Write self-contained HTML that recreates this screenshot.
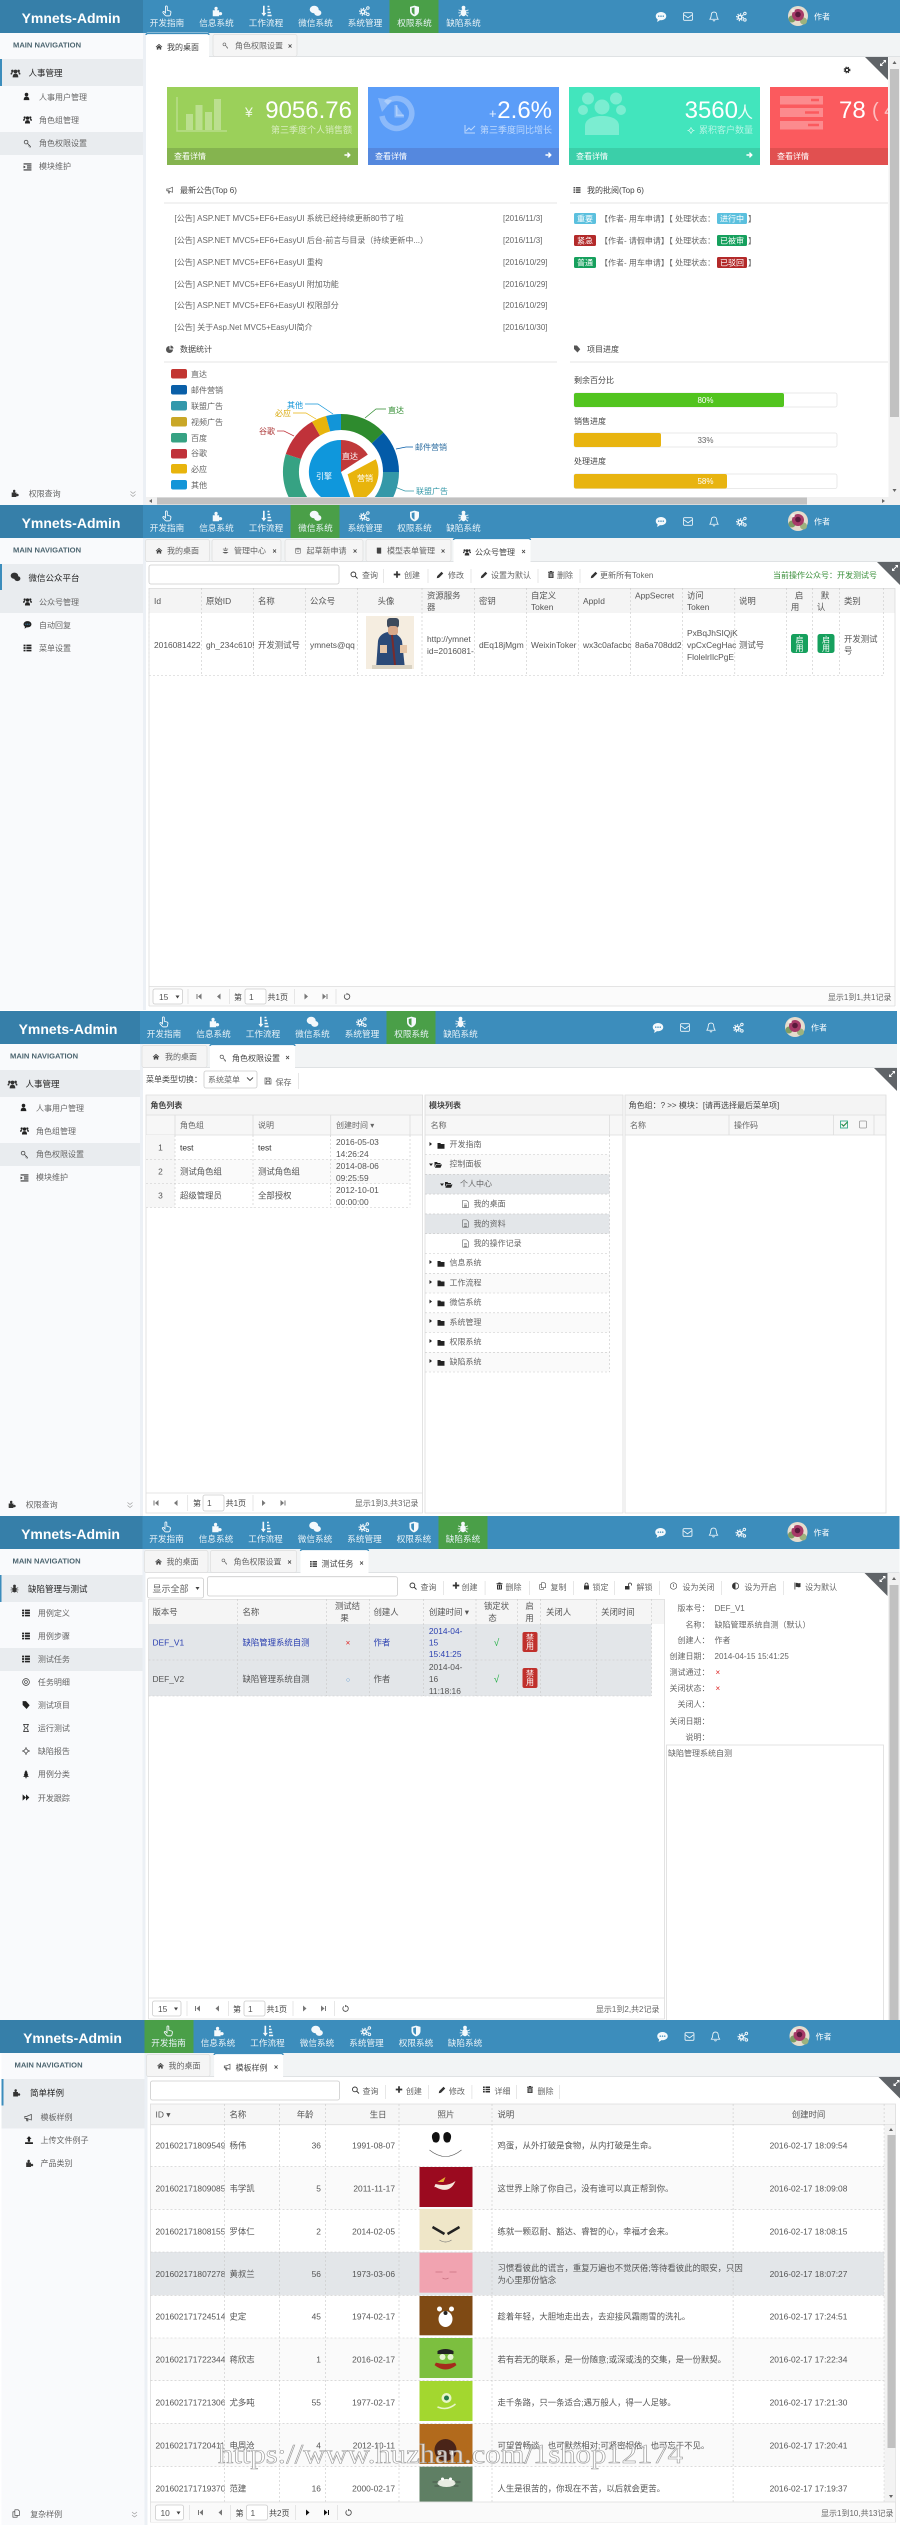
<!DOCTYPE html>
<html lang="zh"><head><meta charset="utf-8"><title>Ymnets-Admin</title>
<style>
html,body{margin:0;padding:0;background:#fff;width:900px;height:2525px;overflow:hidden}
svg{display:block;filter:blur(.3px)}
text{font-family:"Liberation Sans","Noto Sans CJK SC",sans-serif;font-size:8px;fill:#666}
use{fill:currentColor;stroke:currentColor}
.logo{font-size:14px;font-weight:bold;fill:#fff;text-anchor:middle}
.nav{font-size:8.6px;fill:#eaf3f8;text-anchor:middle}
.w{fill:#fff}.d{fill:#444}.k{fill:#222}.m{text-anchor:middle}.r{text-anchor:end}
.mn{font-size:7.6px;font-weight:bold;fill:#4b646f}
.big{font-size:24px;fill:#fff}.sub{font-size:9px;fill:#fff;fill-opacity:.6}
.td{font-size:8.4px;fill:#555}
.da{fill:none;stroke:#c8c8c8;stroke-width:.6;stroke-dasharray:2 2}
.ln{fill:none;stroke:#ddd;stroke-width:.8}
.box{fill:#fff;stroke:#ccc;stroke-width:.8}
.sep{stroke:#ddd;stroke-width:.7}
</style></head><body>
<svg width="900" height="2525" viewBox="0 0 900 2525" xmlns="http://www.w3.org/2000/svg">
<defs>
<symbol id="hand" viewBox="0 0 16 16"><path fill="none" stroke-width="1.2" d="M6 8V2.5a1.2 1.2 0 0 1 2.4 0V7l3.6 1c1 .3 1.4 1 1.2 2l-.7 3.4c-.2.8-.7 1.1-1.5 1.1H7c-.6 0-1-.2-1.4-.7L2.7 10.4c-.8-1 .5-2.3 1.5-1.5L6 10.5z"/></symbol>
<symbol id="puzzle" viewBox="0 0 16 16"><path stroke="none" d="M3 7h3.2C5.2 5.8 5 4.8 5.4 3.6 6 1.8 9 1.8 9.5 3.6c.3 1.2 0 2.2-1 3.4H11.500v3c1-.7 2-.9 3-.3 1.400.9 1.400 3 0 3.800-1 .5-2 .3-3-.4V15H3z"/></symbol>
<symbol id="flow" viewBox="0 0 16 16"><path stroke="none" d="M4 1h2.200v9.500H8.500L5.100 15 1.800 10.500H4zM10 1h2.500v2H10zM10 5h3.500v2H10zM10 9h4.500v2H10zM10 13h5.500v2H10z"/></symbol>
<symbol id="wechat" viewBox="0 0 16 16"><ellipse stroke="none" cx="6.300" cy="6" rx="6" ry="5"/><ellipse stroke="none" cx="11" cy="10.500" rx="4.800" ry="4"/></symbol>
<symbol id="cogs" viewBox="0 0 16 16"><g fill="none"><circle cx="6" cy="9" r="2.500" stroke-width="1.900"/><circle cx="6" cy="9" r="4.500" stroke-width="1.700" stroke-dasharray="1.700 1.800"/><circle cx="12.500" cy="4" r="1.700" stroke-width="1.300"/><circle cx="12.500" cy="12.500" r="1.700" stroke-width="1.300"/></g></symbol>
<symbol id="shield" viewBox="0 0 16 16"><path stroke="none" fill-rule="evenodd" d="M8 .8 14 2.500V8c0 3.800-3 6.200-6 7.200C5 14.200 2 11.800 2 8V2.500zM8 3 4.300 4v4c0 2.400 1.800 4 3.700 4.800z"/></symbol>
<symbol id="bug" viewBox="0 0 16 16"><ellipse stroke="none" cx="8" cy="10" rx="3.700" ry="5"/><circle stroke="none" cx="8" cy="3.500" r="2.500"/><path fill="none" stroke-width="1.100" d="M1.500 6.500 5 8M14.500 6.500 11 8M1 10.500h3.500M15 10.500h-3.500M2 15l3-2.500M14 15l-3-2.500"/></symbol>
<symbol id="chat" viewBox="0 0 16 16"><path stroke="none" d="M8 2c4 0 7 2.400 7 5.500S12 13 8 13l-1.500-.1C5.500 14 3.500 15 2.500 15c.6-.8 1-2 1-3.100C2 10.900 1 9.300 1 7.500 1 4.400 4 2 8 2z"/><g stroke="none" fill="#3c8dbc"><circle cx="5" cy="7.500" r="1"/><circle cx="8" cy="7.500" r="1"/><circle cx="11" cy="7.500" r="1"/></g></symbol>
<symbol id="mail" viewBox="0 0 16 16"><g fill="none" stroke-width="1.200"><rect x="1.500" y="2.500" width="13" height="11" rx="1.500"/><path d="M2 5.500 8 10l6-4.500"/></g></symbol>
<symbol id="bell" viewBox="0 0 16 16"><path fill="none" stroke-width="1.200" d="M8 1.500c-2.800 0-4 2-4 4.500 0 3-1 4.500-2 6h12c-1-1.500-2-3-2-6 0-2.500-1.200-4.500-4-4.500zM6.500 13.500c.3 1.200 2.700 1.200 3 0"/></symbol>
<symbol id="users" viewBox="0 0 16 16"><g stroke="none"><circle cx="8" cy="5.500" r="3"/><circle cx="3" cy="4.500" r="2"/><circle cx="13" cy="4.500" r="2"/><path d="M3.500 15c0-3.500 1-6 4.500-6s4.500 2.500 4.500 6zM0 10c0-2 .8-3.500 3-3.500.6 0 1 .2 1 .5-.8.700-1.400 2-1.500 3.500zM16 10c0-2-.8-3.500-3-3.500-.6 0-1 .2-1 .5.800.700 1.400 2 1.500 3.500z"/></g></symbol>
<symbol id="user" viewBox="0 0 16 16"><g stroke="none"><circle cx="8" cy="4.500" r="3.200"/><path d="M3 14.500c0-4 1.500-6.500 5-6.500s5 2.500 5 6.500z"/></g></symbol>
<symbol id="key" viewBox="0 0 16 16"><g fill="none" stroke-width="1.400"><circle cx="5.500" cy="5.500" r="3.300"/><path d="m8 8 5.500 5.500M11.500 11.500 10 13M13.500 13.500 12 15"/></g></symbol>
<symbol id="indent" viewBox="0 0 16 16"><path stroke="none" d="M1 2.500h14v2H1zM7 6h8v2H7zM7 9.500h8v2H7zM1 13h14v2H1zM1 6.200 5 8.800 1 11.400z"/></symbol>
<symbol id="home" viewBox="0 0 16 16"><path stroke="none" d="M8 2 15.500 8.500 14.300 10 8 4.500 1.700 10 .5 8.500zM3 10l5-4.200L13 10v5H9.500v-3h-3v3H3z"/></symbol>
<symbol id="horn" viewBox="0 0 16 16"><path fill="none" stroke-width="1.300" d="M1.500 6H5L13 2.500V12.500L5 9.500H1.500zM4 10l1 4h2L6 10"/></symbol>
<symbol id="tlist" viewBox="0 0 16 16"><path stroke="none" d="M1 2h3.500v3H1zM6 2h9v3H6zM1 6.500h3.500v3H1zM6 6.500h9v3H6zM1 11h3.500v3H1zM6 11h9v3H6z"/></symbol>
<symbol id="search" viewBox="0 0 16 16"><g fill="none" stroke-width="1.800"><circle cx="6.800" cy="6.800" r="4.800"/><path d="m10.500 10.500 4.500 4.500"/></g></symbol>
<symbol id="plus" viewBox="0 0 16 16"><path stroke="none" d="M6.300 1.500h3.400v4.800h4.800v3.400H9.700v4.800H6.300V9.700H1.500V6.300h4.800z"/></symbol>
<symbol id="pen" viewBox="0 0 16 16"><path stroke="none" d="M11 1.500 14.500 5 6 13.500 1.500 14.500 2.500 10z"/></symbol>
<symbol id="trash" viewBox="0 0 16 16"><path stroke="none" fill-rule="evenodd" d="M6 1h4l.6 1.500H14V4.500H2V2.500h3.400zM3 5.500h10V15H3zM5.500 7v6.500H7V7zM9 7v6.500h1.500V7z"/></symbol>
<symbol id="save" viewBox="0 0 16 16"><g fill="none" stroke-width="1.300"><path d="M2 2h10l2 2v10H2z"/><path d="M5 2.500v3.500h6V2.500M4.500 14V9h7v5"/></g></symbol>
<symbol id="fold" viewBox="0 0 16 16"><path stroke="none" d="M1 3h5.500L8 5h7v9.500H1z"/></symbol>
<symbol id="fopen" viewBox="0 0 16 16"><path stroke="none" d="M1 3h5l1.500 2H13v2H4L1 13.500zM4.800 8H16l-3 6.500H1.800z"/></symbol>
<symbol id="file" viewBox="0 0 16 16"><g fill="none" stroke-width="1"><path d="M3 1.500h7l3 3v10H3z"/><path d="M5.500 8h5M5.500 10.500h5M5.500 13h5"/></g></symbol>
<symbol id="copy" viewBox="0 0 16 16"><g fill="none" stroke-width="1.100"><path d="M6 1.500h6l2 2v8H6z"/><path d="M6 5H2.500v9.500H10V11.500"/></g></symbol>
<symbol id="lock" viewBox="0 0 16 16"><path stroke="none" d="M3 7h10v8H3z"/><path fill="none" stroke-width="1.600" d="M5 7V5a3 3 0 0 1 6 0v2"/></symbol>
<symbol id="unlock" viewBox="0 0 16 16"><path stroke="none" d="M1 8h9v7H1z"/><path fill="none" stroke-width="1.600" d="M8 8V5a3 3 0 0 1 6 0v2"/></symbol>
<symbol id="pow" viewBox="0 0 16 16"><g fill="none" stroke-width="1.100"><circle cx="8" cy="8" r="6.500"/><path d="M8 4v6"/></g></symbol>
<symbol id="half" viewBox="0 0 16 16"><circle fill="none" stroke-width="1.400" cx="8" cy="8" r="6.300"/><path stroke="none" d="M8 2a6 6 0 0 0 0 12z"/></symbol>
<symbol id="flag" viewBox="0 0 16 16"><path stroke="none" d="M2 1h1.600v14H2zM4.500 2c3-1.200 5 1.500 9.500 0v8c-4.500 1.500-6.500-1.200-9.500 0z"/></symbol>
<symbol id="clock" viewBox="0 0 16 16"><g fill="none" stroke-width="1.200"><circle cx="8" cy="8" r="6"/><path d="M5.500 8a2.500 2.500 0 1 0 5 0 2.500 2.500 0 1 0-5 0"/></g></symbol>
<symbol id="tag" viewBox="0 0 16 16"><path stroke="none" d="M2 1h6l6.500 7.500L9 15 2 8z"/></symbol>
<symbol id="hour" viewBox="0 0 16 16"><path fill="none" stroke-width="1.300" d="M3 1.500h10M3 14.500h10M4.500 1.500v3L7 8l-2.500 3.500v3M11.500 1.500v3L9 8l2.500 3.500v3"/></symbol>
<symbol id="cross" viewBox="0 0 16 16"><g fill="none" stroke-width="1.300"><path d="M8 3.500 12.500 8 8 12.500 3.500 8z"/><path d="M8 1v3M8 12v3M1 8h3M12 8h3"/></g></symbol>
<symbol id="tree" viewBox="0 0 16 16"><path stroke="none" d="M8 1 11 5.500H9.800L12 9.500H10.500L13 13H9v2.500H7V13H3l2.500-3.500H4L6.200 5.500H5z"/></symbol>
<symbol id="ff" viewBox="0 0 16 16"><path stroke="none" d="M2 2.500 8 8 2 13.500zM8 2.500 14 8 8 13.500z"/></symbol>
<symbol id="upl" viewBox="0 0 16 16"><path stroke="none" d="M8 1 12.500 6H10v5H6V6H3.500zM1 12h14v3H1z"/></symbol>
<symbol id="pie" viewBox="0 0 16 16"><path stroke="none" d="M7 2a7 7 0 1 0 7 7H7zM9 1v6h6a6 6 0 0 0-6-6z"/></symbol>
<symbol id="cal" viewBox="0 0 16 16"><g fill="none" stroke-width="1.200"><rect x="2.500" y="3" width="11" height="11.500" rx="1"/><path d="M2.500 6.500h11M6 1.500v3M10 1.500v3M6 10.500h4"/></g></symbol>
<symbol id="book" viewBox="0 0 16 16"><path stroke="none" d="M3 1.500h10V15H5a2 2 0 0 1-2-2z"/></symbol>
<symbol id="scale" viewBox="0 0 16 16"><path stroke="none" d="M7.200 1h1.600v3H14v1.500H2V4h5.200zM4 7.500h8V9H4zM2 11.500h12V13H2zM5 13h6v1.500H5z"/></symbol>
<symbol id="arr" viewBox="0 0 16 16"><path stroke="none" d="M9 1.500 15.500 8 9 14.500 6.700 12.200 9.300 9.600H1V6.400H9.300L6.700 3.800z"/></symbol>
<symbol id="first" viewBox="0 0 16 16"><path stroke="none" d="M3 3h2v10H3zM13 2v12L6 8z"/></symbol>
<symbol id="prev" viewBox="0 0 16 16"><path stroke="none" d="M11 2v12L4 8z"/></symbol>
<symbol id="next" viewBox="0 0 16 16"><path stroke="none" d="M5 2v12l7-6z"/></symbol>
<symbol id="last" viewBox="0 0 16 16"><path stroke="none" d="M3 2v12l7-6zM11 3h2v10h-2z"/></symbol>
<symbol id="ref" viewBox="0 0 16 16"><path fill="none" stroke-width="1.800" d="M9.500 2.900A5.500 5.500 0 1 1 4.600 4"/><path stroke="none" d="M7 .5v5L10.500 3z"/></symbol>
<symbol id="gear" viewBox="0 0 16 16"><circle fill="none" stroke-width="2.600" cx="8" cy="8" r="3.600"/><circle fill="none" stroke-width="2" stroke-dasharray="2.400 2.300" cx="8" cy="8" r="5.800"/></symbol>
<symbol id="exp" viewBox="0 0 16 16"><path fill="none" stroke-width="2" d="M3 13 13 3M9 3h4v4M3 9v4h4"/></symbol>
<symbol id="chev" viewBox="0 0 16 16"><path fill="none" stroke-width="1.300" d="m3 3 5 4 5-4M3 9l5 4 5-4"/></symbol>
<symbol id="ava" viewBox="0 0 20 20"><circle stroke="none" cx="10" cy="10" r="10" fill="#e6dccd"/><circle stroke="none" cx="4" cy="13" r="3.500" fill="#7f9c64"/><circle stroke="none" cx="15.500" cy="15" r="3.500" fill="#9db27e"/><circle stroke="none" cx="10" cy="9" r="6" fill="#a63a68"/><circle stroke="none" cx="10" cy="8.500" r="2.800" fill="#5a1a3c"/><circle stroke="none" cx="5" cy="4.500" r="1.800" fill="#f3ece6"/></symbol>
<g id="hi" color="#f4f9fc">
<use href="#hand" x="161" y="5" width="12" height="12"/><use href="#puzzle" x="210.500" y="5" width="12" height="12"/><use href="#flow" x="260" y="5" width="12" height="12"/><use href="#wechat" x="309.500" y="5" width="12" height="12"/><use href="#cogs" x="358.500" y="5" width="12" height="12"/><use href="#shield" x="408.500" y="5" width="12" height="12"/><use href="#bug" x="457.500" y="5" width="12" height="12"/>
<use href="#chat" x="655" y="10.500" width="12" height="12"/><use href="#mail" x="682.500" y="11" width="11" height="11"/><use href="#bell" x="708.500" y="11" width="11" height="11"/><use href="#cogs" x="735.500" y="10.500" width="12" height="12"/><use href="#ava" x="788" y="6" width="20" height="20" color="#fff"/>
</g>
<g id="side"><rect y="33" width="143" height="472" fill="#f9fafc"/><rect x="143" y="33" width="757" height="472" fill="#fff"/><rect x="143" y="33" width="3" height="472" fill="#ecf0f5"/><rect x="146" y="33" width="754" height="23" fill="#f2f4f5"/><path d="M146 56.500H900" stroke="#d5d8db" stroke-width=".8"/><rect y="59" width="143" height="27" fill="#e9ecef"/><rect y="59" width="2" height="27" fill="#3c8dbc"/></g>
<g id="tri"><path d="M0 0H23V23z" fill="#606468"/><use href="#exp" x="14" y="2" width="8" height="8" color="#fff"/></g>
<clipPath id="cid"><rect x="150" y="100" width="73" height="385"/></clipPath>
</defs>

<!-- PANEL 1 -->
<g>
<rect width="900" height="33" fill="#3c8dbc"/><rect width="143" height="33" fill="#367fa9"/><rect x="389.500" width="49" height="33" fill="#4a9f48"/><use href="#hi" color="#f4f9fc" style="stroke:none;fill:none"/>
<text class="logo" x="71" y="23">Ymnets-Admin</text>
<text class="nav" x="167" y="26">开发指南</text><text class="nav" x="216.500" y="26">信息系统</text><text class="nav" x="266" y="26">工作流程</text><text class="nav" x="315.500" y="26">微信系统</text><text class="nav" x="365" y="26">系统管理</text><text class="nav" x="414.500" y="26">权限系统</text><text class="nav" x="463.500" y="26">缺陷系统</text><text class="w" x="814" y="19.500">作者</text>
<use href="#side" style="stroke:none;fill:none"/>
<text class="mn" x="13" y="47.500">MAIN NAVIGATION</text>
<use href="#users" x="10" y="68" width="11" height="10" color="#333"/><text class="k" x="28.500" y="76" style="font-size:8.500px">人事管理</text>
<rect y="132" width="143" height="23" fill="#e9ecef"/>
<use href="#user" x="22" y="92" width="9" height="9" color="#222"/><text x="39" y="100">人事用户管理</text>
<use href="#users" x="23" y="115" width="9" height="9" color="#222"/><text x="39" y="123">角色组管理</text>
<use href="#key" x="23" y="139" width="9" height="9" color="#444"/><text x="39" y="146">角色权限设置</text>
<use href="#indent" x="23" y="162" width="9" height="9" color="#333"/><text x="39" y="169">模块维护</text>
<use href="#puzzle" x="10" y="488.500" width="9" height="9" color="#333"/><text x="28.700" y="496.500">权限查询</text><use href="#chev" x="129" y="490" width="8" height="8" color="#999"/>
<path d="M146 34.500a2 2 0 0 1 2-2h59a2 2 0 0 1 2 2V57H146z" fill="#fff"/><path d="M146 35q0-1.500 2-1.500h59q2 0 2 1.500" fill="none" stroke="#3c8dbc" stroke-width="1.300"/><use href="#home" x="155.500" y="43" width="7" height="7" color="#444"/><text class="k" x="167" y="50" style="fill:#444">我的桌面</text>
<rect x="213" y="34.500" width="84" height="22" rx="2" fill="#f5f5f5" stroke="#ddd" stroke-width=".7"/><use href="#key" x="222" y="42" width="7" height="7" color="#666"/><text x="235" y="48.500">角色权限设置</text><text x="288" y="48.500" class="d" style="font-weight:bold;font-size:7px">×</text>
<use href="#gear" x="843" y="66" width="8" height="8" color="#222"/>
<rect x="167" y="87" width="191" height="78" fill="#9bd05a"/><rect x="167" y="148" width="191" height="17" fill="#85b44f"/>
<path d="M177 97v34h50" fill="none" stroke="#fff" stroke-opacity=".3" stroke-width="1.500"/><path d="M186 114h7v16h-7zM195.500 105h7v25h-7zM205 112h7v18h-7zM214 99h7v31h-7z" fill="#fff" fill-opacity=".32"/>
<text class="w" x="245" y="117" style="font-size:14px;fill-opacity:.85">¥</text><text class="big r" x="352" y="118">9056.76</text><text class="sub r" x="352" y="133">第三季度个人销售额</text><text class="w" x="174" y="159">查看详情</text><use href="#arr" x="344" y="151.500" width="7" height="7" color="#fff"/>
<rect x="368" y="87" width="191" height="78" fill="#5b9df8"/><rect x="368" y="148" width="191" height="17" fill="#5588de"/>
<path d="M386 103a15 15 0 1 1-4 13" fill="none" stroke="#fff" stroke-opacity=".3" stroke-width="5.500"/><path d="M378 98l14 2-10 12zM396 105v11h8" fill="#fff" fill-opacity=".3"/><path d="M396 105v11h8" fill="none" stroke="#fff" stroke-opacity=".3" stroke-width="3"/>
<text class="w" x="489" y="118" style="font-size:13px;fill-opacity:.85">+</text><text class="big r" x="552" y="118">2.6%</text><path d="M465 125v8h10M466 131l3-3 2 2 4-4" fill="none" stroke="#fff" stroke-opacity=".6"/><text class="sub r" x="552" y="133">第三季度同比增长</text><text class="w" x="375" y="159">查看详情</text><use href="#arr" x="545" y="151.500" width="7" height="7" color="#fff"/>
<rect x="569" y="87" width="191" height="78" fill="#42e5bd"/><rect x="569" y="148" width="191" height="17" fill="#3bcfa9"/>
<g fill="#fff" fill-opacity=".3"><circle cx="588" cy="98.500" r="6"/><circle cx="616" cy="98.500" r="6"/><circle cx="583" cy="110" r="5"/><circle cx="621" cy="110" r="5"/><circle cx="602" cy="107" r="7.500"/><path d="M585 135v-9c0-6 6-10 17-10s17 4 17 10v9z"/></g>
<text class="big r" x="738" y="118">3560</text><text class="w r" x="753" y="118" style="font-size:16px;fill-opacity:.9">人</text><use href="#cross" x="687" y="126.500" width="8" height="8" color="#d9f9f0"/><text class="sub r" x="753" y="133">累积客户数量</text><text class="w" x="576" y="159">查看详情</text><use href="#arr" x="746" y="151.500" width="7" height="7" color="#fff"/>
<rect x="770" y="87" width="118" height="78" fill="#fb5a5e"/><rect x="770" y="148" width="118" height="17" fill="#e15050"/>
<path d="M780 96h43v8.500h-43zM780 108h43v9h-43zM780 121h43v8.500h-43z" fill="#fff" fill-opacity=".3"/><path d="M811 100h8M805 112.500h14M808 125h11" stroke="#fb5a5e" stroke-width="2.500"/>
<text class="big" x="839" y="118">78</text><text class="w" x="872" y="117" style="font-size:20px;fill-opacity:.6">( 4</text><text class="w" x="777" y="159">查看详情</text>
<use href="#horn" x="166" y="186" width="8" height="8" color="#555"/><text class="d" x="180" y="193">最新公告(Top 6)</text><path class="ln" d="M164 203H557M570 203H888"/>
<use href="#tlist" x="573" y="186" width="8" height="8" color="#555"/><text class="d" x="587" y="193">我的批阅(Top 6)</text>
<text x="174.500" y="221">[公告] ASP.NET MVC5+EF6+EasyUI 系统已经持续更新80节了啦</text><text x="503" y="221">[2016/11/3]</text>
<text x="174.500" y="243">[公告] ASP.NET MVC5+EF6+EasyUI 后台-前言与目录（持续更新中...）</text><text x="503" y="243">[2016/11/3]</text>
<text x="174.500" y="265">[公告] ASP.NET MVC5+EF6+EasyUI 重构</text><text x="503" y="265">[2016/10/29]</text>
<text x="174.500" y="287">[公告] ASP.NET MVC5+EF6+EasyUI 附加功能</text><text x="503" y="287">[2016/10/29]</text>
<text x="174.500" y="308">[公告] ASP.NET MVC5+EF6+EasyUI 权限部分</text><text x="503" y="308">[2016/10/29]</text>
<text x="174.500" y="330">[公告] 关于Asp.Net MVC5+EasyUI简介</text><text x="503" y="330">[2016/10/30]</text>
<rect x="574" y="213" width="22" height="11" rx="1.500" fill="#5bc0de"/><text class="w m" x="585" y="221.500">重要</text><text x="600" y="221.500">【作者- 用车申请】【 处理状态：</text><rect x="717" y="213" width="30" height="11" rx="1.500" fill="#5bc0de"/><text class="w m" x="732" y="221.500">进行中</text><text x="748" y="221.500">】</text>
<rect x="574" y="235" width="22" height="11" rx="1.500" fill="#b32a2a"/><text class="w m" x="585" y="243.500">紧急</text><text x="600" y="243.500">【作者- 请假申请】【 处理状态：</text><rect x="717" y="235" width="30" height="11" rx="1.500" fill="#16a05d"/><text class="w m" x="732" y="243.500">已被审</text><text x="748" y="243.500">】</text>
<rect x="574" y="257" width="22" height="11" rx="1.500" fill="#16a05d"/><text class="w m" x="585" y="265.500">普通</text><text x="600" y="265.500">【作者- 用车申请】【 处理状态：</text><rect x="717" y="257" width="30" height="11" rx="1.500" fill="#b32a2a"/><text class="w m" x="732" y="265.500">已驳回</text><text x="748" y="265.500">】</text>
<use href="#pie" x="166" y="345" width="8" height="8" color="#555"/><text class="d" x="180" y="352">数据统计</text><use href="#tag" x="573" y="345" width="8" height="8" color="#555"/><text class="d" x="587" y="352">项目进度</text><path class="ln" d="M164 362H557M570 362H888"/>
<rect x="171" y="369" width="16" height="9.500" rx="2" fill="#c23531"/><text x="191" y="377">直达</text>
<rect x="171" y="385" width="16" height="9.500" rx="2" fill="#0a5fa8"/><text x="191" y="393">邮件营销</text>
<rect x="171" y="401" width="16" height="9.500" rx="2" fill="#3398ab"/><text x="191" y="409">联盟广告</text>
<rect x="171" y="417" width="16" height="9.500" rx="2" fill="#c9a727"/><text x="191" y="425">视频广告</text>
<rect x="171" y="433" width="16" height="9.500" rx="2" fill="#36a283"/><text x="191" y="441">百度</text>
<rect x="171" y="449" width="16" height="9.500" rx="2" fill="#c0323a"/><text x="191" y="456">谷歌</text>
<rect x="171" y="464" width="16" height="9.500" rx="2" fill="#e8b40c"/><text x="191" y="472">必应</text>
<rect x="171" y="480" width="16" height="9.500" rx="2" fill="#1295d8"/><text x="191" y="488">其他</text>
<g fill="none" stroke-width="16"><path stroke="#2e8b2e" d="M341 422A50 50 0 0 1 377.600 437.900"/><path stroke="#035ba8" d="M377.600 437.900A50 50 0 0 1 391 472"/><path stroke="#3498a8" d="M391 472A50 50 0 0 1 341 522"/><path stroke="#36a283" d="M341 522A50 50 0 0 1 293.400 456.500"/><path stroke="#c0323a" d="M293.400 456.500A50 50 0 0 1 316 428.700"/><path stroke="#e8b40c" d="M316 428.700A50 50 0 0 1 328.100 423.700"/><path stroke="#1295d8" d="M328.100 423.700A50 50 0 0 1 341 422"/></g>
<path d="M341 472V440A32 32 0 1 0 352 502Z" fill="#0f97dc"/><path d="M341 472V440A32 32 0 0 1 367.800 454.600Z" fill="#c0393a"/><path d="M347 474L376 458.500A32 32 0 0 1 355.300 503Z" fill="#e8b40c" stroke="#fff" stroke-width="1"/>
<g fill="none" stroke-width=".7"><path stroke="#2e8b2e" d="M365 418l11-9h10"/><path stroke="#035ba8" d="M396 449l10-2h7"/><path stroke="#3498a8" d="M395 487l10 4h9"/><path stroke="#c0323a" d="M294 436l-10-5h-7"/><path stroke="#e8b40c" d="M316 419l-10-6h-13"/><path stroke="#1295d8" d="M333 414l-15-10h-13"/></g>
<text x="388" y="413" style="fill:#2e8b2e">直达</text><text x="415" y="450" style="fill:#2c6da0">邮件营销</text><text x="416" y="494" style="fill:#3498a8">联盟广告</text><text x="259" y="434" style="fill:#a33">谷歌</text><text x="275" y="416" style="fill:#d9a90c">必应</text><text x="287" y="408" style="fill:#1295d8">其他</text>
<text class="w" x="342" y="459">直达</text><text class="w" x="357" y="481">营销</text><text class="w" x="316" y="479">引擎</text>
<text x="574" y="383" class="d">剩余百分比</text><rect x="574" y="393" width="263" height="14" rx="2" fill="#fff" stroke="#e4e4e4" stroke-width=".8"/><rect x="574" y="393" width="210" height="14" rx="2" fill="#52c41f"/><text class="w m" x="705.500" y="403">80%</text>
<text x="574" y="424" class="d">销售进度</text><rect x="574" y="433" width="263" height="14" rx="2" fill="#fff" stroke="#e4e4e4" stroke-width=".8"/><rect x="574" y="433" width="87" height="14" rx="2" fill="#e8b410"/><text class="m" x="705.500" y="443">33%</text>
<text x="574" y="464" class="d">处理进度</text><rect x="574" y="474" width="263" height="14.500" rx="2" fill="#fff" stroke="#e4e4e4" stroke-width=".8"/><rect x="574" y="474" width="153" height="14.500" rx="2" fill="#e8b410"/><text class="w m" x="705.500" y="484">58%</text>
<use href="#tri" x="865" y="57" style="stroke:none;fill:none"/>
<rect x="888.500" y="57" width="11.500" height="440" fill="#f1f1f1"/><rect x="890" y="69" width="9" height="348" fill="#c1c1c1"/><path d="M894.500 61l2 3h-4zM894.500 492l2-3h-4z" fill="#666"/>
<rect x="146" y="497" width="754" height="8" fill="#f1f1f1"/><rect x="157" y="497.500" width="650" height="7" fill="#c1c1c1"/><path d="M149 501l3-2v4zM885 501l-3-2v4z" fill="#666"/>
</g>

<!-- PANEL 2 -->
<g transform="translate(0,505)">
<rect width="900" height="33" fill="#3c8dbc"/><rect width="143" height="33" fill="#367fa9"/><rect x="290.500" width="49" height="33" fill="#4a9f48"/><use href="#hi" style="stroke:none;fill:none"/>
<text class="logo" x="71" y="23">Ymnets-Admin</text>
<text class="nav" x="167" y="26">开发指南</text><text class="nav" x="216.500" y="26">信息系统</text><text class="nav" x="266" y="26">工作流程</text><text class="nav" x="315.500" y="26">微信系统</text><text class="nav" x="365" y="26">系统管理</text><text class="nav" x="414.500" y="26">权限系统</text><text class="nav" x="463.500" y="26">缺陷系统</text><text class="w" x="814" y="19.500">作者</text>
<use href="#side" style="stroke:none;fill:none"/>
<text class="mn" x="13" y="47.500">MAIN NAVIGATION</text>
<use href="#wechat" x="10.500" y="67" width="10" height="10" color="#333"/><text class="k" x="28.500" y="76" style="font-size:8.500px">微信公众平台</text>
<rect y="85" width="143" height="23" fill="#e9ecef"/>
<use href="#users" x="23" y="92" width="9" height="9" color="#222"/><text x="39" y="100">公众号管理</text>
<use href="#chat" x="23" y="115" width="9" height="9" color="#222"/><text x="39" y="123">自动回复</text>
<use href="#tlist" x="23" y="138.500" width="9" height="9" color="#222"/><text x="39" y="146">菜单设置</text>
<rect x="145.500" y="34.500" width="64" height="22" rx="2" fill="#f5f5f5" stroke="#ddd" stroke-width=".7"/><use href="#home" x="155.500" y="42" width="7" height="7" color="#444"/><text x="167" y="48.500">我的桌面</text>
<rect x="212" y="34.500" width="69" height="22" rx="2" fill="#f5f5f5" stroke="#ddd" stroke-width=".7"/><use href="#scale" x="222" y="42" width="7" height="7" color="#555"/><text x="234" y="48.500">管理中心</text><text x="272.500" y="48.500" class="d" style="font-weight:bold;font-size:7px">×</text>
<rect x="285" y="34.500" width="78" height="22" rx="2" fill="#f5f5f5" stroke="#ddd" stroke-width=".7"/><use href="#cal" x="294.500" y="42" width="7" height="7" color="#555"/><text x="306.500" y="48.500">起草新申请</text><text x="353" y="48.500" class="d" style="font-weight:bold;font-size:7px">×</text>
<rect x="366" y="34.500" width="85" height="22" rx="2" fill="#f5f5f5" stroke="#ddd" stroke-width=".7"/><use href="#book" x="375.500" y="42" width="7" height="7" color="#444"/><text x="387" y="48.500">模型表单管理</text><text x="441" y="48.500" class="d" style="font-weight:bold;font-size:7px">×</text>
<path d="M453.500 57V35q0-1.500 2-1.500h73q2 0 2 1.500V57z" fill="#fff"/><path d="M453.500 35q0-1.500 2-1.500h73q2 0 2 1.500" fill="none" stroke="#3c8dbc" stroke-width="1.300"/><use href="#users" x="463" y="43" width="8" height="8" color="#333"/><text x="475" y="50" class="d">公众号管理</text><text x="521.500" y="49" class="d" style="font-weight:bold;font-size:7px">×</text>
<rect x="149" y="60" width="190" height="19" rx="2" class="box"/>
<use href="#search" x="350" y="66" width="8" height="8" color="#333"/><text x="362" y="73">查询</text><path class="sep" d="M383.500 64V78M428 64V78M471 64V78M538 64V78M580 64V78"/>
<use href="#plus" x="393" y="65.500" width="8" height="8" color="#333"/><text x="404" y="73">创建</text>
<use href="#pen" x="436" y="66" width="8" height="8" color="#333"/><text x="448" y="73">修改</text>
<use href="#pen" x="480" y="66" width="8" height="8" color="#333"/><text x="491" y="73">设置为默认</text>
<use href="#trash" x="547" y="65.500" width="8" height="8" color="#333"/><text x="557" y="73">删除</text>
<use href="#pen" x="590" y="66" width="8" height="8" color="#333"/><text x="600" y="73">更新所有Token</text>
<text x="773" y="73" style="fill:#3a8f3a">当前操作公众号：开发测试号</text>
<use href="#tri" x="877" y="57" style="stroke:none;fill:none"/>
<rect x="149" y="83" width="746" height="25" fill="#f4f4f4"/><path class="ln" d="M149 83.500H895"/>
<path d="M201.500 83V170.500M253.700 83V170.500M305.400 83V170.500M357.600 83V170.500M422 83V170.500M474.700 83V170.500M526.400 83V170.500M578.700 83V170.500M630.300 83V170.500M682.500 83V170.500M734.800 83V170.500M786.400 83V170.500M812.300 83V170.500M839.300 83V170.500M883.500 83V170.500M149 83V170.500M149 170.500H884" class="da"/>
<g class="hd"><text class="td" x="154" y="99">Id</text><text class="td" x="206" y="99">原始ID</text><text class="td" x="258" y="99">名称</text><text class="td" x="310" y="99">公众号</text><text class="td m" x="386" y="99">头像</text><text class="td" x="427" y="93.500">资源服务</text><text class="td" x="427" y="105">器</text><text class="td" x="479" y="99">密钥</text><text class="td" x="531" y="93.500">自定义</text><text class="td" x="531" y="105">Token</text><text class="td" x="583" y="99">AppId</text><text class="td" x="635" y="93.500">AppSecret</text><text class="td" x="687" y="93.500">访问</text><text class="td" x="687" y="105">Token</text><text class="td" x="739" y="99">说明</text><text class="td m" x="799" y="93.500">启</text><text class="td m" x="795" y="105">用</text><text class="td m" x="825" y="93.500">默</text><text class="td m" x="821" y="105">认</text><text class="td" x="844" y="99">类别</text></g>
<text class="td" x="154" y="143">2016081422</text><text class="td" x="206" y="143">gh_234c610!</text><text class="td" x="258" y="143">开发测试号</text><text class="td" x="310" y="143">ymnets@qq</text>
<rect x="366" y="111" width="48" height="53" fill="#f5ede0"/><path d="M376 164l2-28c1-6 7-9 11-9s11 3 13 9l3 28z" fill="#2b4a78"/><rect x="387" y="113" width="12" height="10" rx="3" fill="#3d4a5c"/><rect x="388" y="121" width="10" height="9" rx="3" fill="#d9a98a"/><path d="M392 130l3 30" stroke="#7a2b2b" stroke-width="2"/><path d="M380 140h7v8h-7zM400 140h7v8h-7z" fill="#e6c6a8"/><path d="M372 160h40v4h-40z" fill="#d9d2c2"/>
<text class="td" x="427" y="137">http://ymnet</text><text class="td" x="427" y="149">id=2016081-</text><text class="td" x="479" y="143">dEq18jMgm</text><text class="td" x="531" y="143">WeixinToker</text><text class="td" x="583" y="143">wx3c0afacbc</text><text class="td" x="635" y="143">8a6a708dd2</text><text class="td" x="687" y="131">PxBqJhSIQjK</text><text class="td" x="687" y="143">vpCxCegHac</text><text class="td" x="687" y="155">FlolelrIlcPgE</text><text class="td" x="739" y="143">测试号</text>
<rect x="791" y="129" width="17" height="19" rx="2.500" fill="#16a05d"/><text class="w m" x="799.500" y="137.500">启</text><text class="w m" x="799.500" y="146">用</text>
<rect x="817.500" y="129" width="17" height="19" rx="2.500" fill="#16a05d"/><text class="w m" x="826" y="137.500">启</text><text class="w m" x="826" y="146">用</text>
<text class="td" x="844" y="137">开发测试</text><text class="td" x="844" y="148.500">号</text>
<rect x="149" y="481" width="746" height="20" fill="#fbfbfb"/><path class="ln" d="M149 481.500H895M149 501H895M149 83V501M895 83V501"/>
<rect x="153" y="484" width="29.500" height="15" rx="2" class="box"/><text class="td" x="159" y="495">15</text><path d="M175.500 490.500h4l-2 3z" fill="#444"/>
<path class="sep" d="M188 484V499M229.600 484V499M294.500 484V499M336 484V499"/>
<use href="#first" x="195" y="487.500" width="8" height="8" color="#777"/><use href="#prev" x="215" y="487.500" width="8" height="8" color="#777"/><text class="d" x="234" y="495">第</text><rect x="245" y="484" width="21" height="15" rx="2" class="box"/><text class="td" x="249" y="495">1</text><text class="d" x="267.500" y="495">共1页</text><use href="#next" x="302" y="487.500" width="8" height="8" color="#777"/><use href="#last" x="321" y="487.500" width="8" height="8" color="#777"/><use href="#ref" x="343" y="487.500" width="8" height="8" color="#555"/><text class="r" x="891.500" y="495">显示1到1,共1记录</text>
</g>

<!-- PANEL 3 -->
<g transform="translate(-3,1011)">
<rect width="900" height="33" fill="#3c8dbc"/><rect width="143" height="33" fill="#367fa9"/><rect x="389.500" width="49" height="33" fill="#4a9f48"/><use href="#hi" style="stroke:none;fill:none"/>
<text class="logo" x="71" y="23">Ymnets-Admin</text>
<text class="nav" x="167" y="26">开发指南</text><text class="nav" x="216.500" y="26">信息系统</text><text class="nav" x="266" y="26">工作流程</text><text class="nav" x="315.500" y="26">微信系统</text><text class="nav" x="365" y="26">系统管理</text><text class="nav" x="414.500" y="26">权限系统</text><text class="nav" x="463.500" y="26">缺陷系统</text><text class="w" x="814" y="19.500">作者</text>
<use href="#side" style="stroke:none;fill:none"/>
<text class="mn" x="13" y="47.500">MAIN NAVIGATION</text>
<use href="#users" x="10" y="68" width="11" height="10" color="#333"/><text class="k" x="28.500" y="76" style="font-size:8.500px">人事管理</text>
<rect y="132" width="143" height="23" fill="#e9ecef"/>
<use href="#user" x="22" y="92" width="9" height="9" color="#222"/><text x="39" y="100">人事用户管理</text>
<use href="#users" x="23" y="115" width="9" height="9" color="#222"/><text x="39" y="123">角色组管理</text>
<use href="#key" x="23" y="139" width="9" height="9" color="#444"/><text x="39" y="146">角色权限设置</text>
<use href="#indent" x="23" y="162" width="9" height="9" color="#333"/><text x="39" y="169">模块维护</text>
<use href="#puzzle" x="10" y="488.500" width="9" height="9" color="#333"/><text x="28.700" y="496.500">权限查询</text><use href="#chev" x="129" y="490" width="8" height="8" color="#999"/>
<rect x="145" y="34.500" width="65" height="22" rx="2" fill="#f5f5f5" stroke="#ddd" stroke-width=".7"/><use href="#home" x="155.500" y="42" width="7" height="7" color="#444"/><text x="168" y="48.500">我的桌面</text>
<path d="M213 57V35q0-1.500 2-1.500h81q2 0 2 1.500V57z" fill="#fff"/><path d="M213 35q0-1.500 2-1.500h81q2 0 2 1.500" fill="none" stroke="#3c8dbc" stroke-width="1.300"/><use href="#key" x="222" y="43" width="8" height="8" color="#555"/><text class="d" x="235" y="50">角色权限设置</text><text class="d" x="288.500" y="49" style="font-weight:bold;font-size:7px">×</text>
<text class="d" x="149" y="71">菜单类型切换：</text><rect x="207" y="60" width="53" height="17" rx="2" class="box"/><text x="211" y="71.500">系统菜单</text><path d="M250 66.500l3 3 3-3" fill="none" stroke="#444" stroke-width=".9"/>
<use href="#save" x="267" y="66" width="8" height="8" color="#555"/><text x="278.500" y="74">保存</text><path class="sep" d="M301.500 62V78"/>
<use href="#tri" x="877" y="57" style="stroke:none;fill:none"/>
<rect x="149" y="84" width="276.500" height="20" fill="#f4f4f4"/><rect x="428" y="84" width="198" height="20" fill="#f4f4f4"/><rect x="628" y="84" width="261" height="20" fill="#f4f4f4"/>
<rect x="149" y="104" width="276.500" height="20" fill="#f7f7f7"/><rect x="428" y="104" width="198" height="20" fill="#f7f7f7"/><rect x="628" y="104" width="261" height="20" fill="#f7f7f7"/>
<path d="M149 84H425.500V502H149ZM428 84H626V502H428ZM628 84H889V502H628ZM149 104H425.500M428 104H626M628 104H889M149 124H425.500M428 124H626M628 124H889M149 482H425.500M178 104V124M256 104V124M333.700 104V124M413 104V124M612.600 104V124M732 104V124M836.500 104V124M877 104V124" class="ln"/>
<text class="d" x="153.400" y="97" style="font-weight:bold">角色列表</text><text class="d" x="432" y="97" style="font-weight:bold">模块列表</text><text class="d" x="631.600" y="97">角色组：? &gt;&gt; 模块：[请再选择最后菜单项]</text>
<text x="183" y="117">角色组</text><text x="261" y="117">说明</text><text x="339" y="117">创建时间 ▾</text><text x="433.600" y="117">名称</text><text x="633" y="117">名称</text><text x="737" y="117">操作码</text>
<rect x="843.500" y="110" width="7" height="7" fill="none" stroke="#3a8" stroke-width=".9"/><path d="M844.500 113l2 2 4-4" fill="none" stroke="#2a8a4a" stroke-width="1.200"/><rect x="862.500" y="110" width="7" height="7" rx="1" fill="none" stroke="#999" stroke-width=".8"/>
<rect x="149" y="124" width="29" height="72.500" fill="#f6f6f6"/><rect x="178" y="148.500" width="235" height="24" fill="#fafafa"/>
<path class="da" d="M149 148.500H413M149 172.500H413M149 196.500H413M178 124V196.500M256 124V196.500M333.700 124V196.500M413 124V196.500"/>
<text class="td m" x="163.500" y="139.500">1</text><text class="td" x="183" y="139.500" style="fill:#333">test</text><text class="td" x="261" y="139.500" style="fill:#333">test</text><text class="td" x="339" y="134">2016-05-03</text><text class="td" x="339" y="146">14:26:24</text>
<text class="td m" x="163.500" y="163.500">2</text><text class="td" x="183" y="163.500">测试角色组</text><text class="td" x="261" y="163.500">测试角色组</text><text class="td" x="339" y="158">2014-08-06</text><text class="td" x="339" y="170">09:25:59</text>
<text class="td m" x="163.500" y="187.500">3</text><text class="td" x="183" y="187.500">超级管理员</text><text class="td" x="261" y="187.500">全部授权</text><text class="td" x="339" y="182">2012-10-01</text><text class="td" x="339" y="194">00:00:00</text>
<use href="#first" x="155" y="488" width="8" height="8" color="#777"/><use href="#prev" x="175" y="488" width="8" height="8" color="#777"/><path class="sep" d="M190.700 484V500M256 484V500"/><text class="d" x="196" y="495">第</text><rect x="206" y="484" width="21" height="16" rx="2" class="box"/><text class="td" x="210" y="495">1</text><text class="d" x="228.600" y="495">共1页</text><use href="#next" x="262.500" y="488" width="8" height="8" color="#777"/><use href="#last" x="282" y="488" width="8" height="8" color="#777"/><text class="r" x="421.500" y="495">显示1到3,共3记录</text>
<rect x="428.500" y="143.500" width="184" height="19.800" fill="#fafafa"/><rect x="428.500" y="163.300" width="184" height="19.800" fill="#e3e6e9"/><rect x="428.500" y="202.900" width="184" height="19.800" fill="#e3e6e9"/><rect x="428.500" y="262.400" width="184" height="19.700" fill="#fafafa"/><rect x="428.500" y="301.800" width="184" height="19.700" fill="#fafafa"/><rect x="428.500" y="341" width="184" height="19.700" fill="#fafafa"/>
<path class="da" d="M428 143.500H612.600M428 163.300H612.600M428 183.100H612.600M428 202.900H612.600M428 222.700H612.600M428 242.500H612.600M428 262.300H612.600M428 282H612.600M428 301.800H612.600M428 321.500H612.600M428 341.300H612.600M428 361H612.600M612.600 124V361"/>
<g color="#222">
<path d="M432.500 131l2.500 2-2.500 2z" fill="#222"/><use href="#fold" x="440" y="130.500" width="8" height="8"/><text x="452.500" y="136">开发指南</text>
<path d="M432 152.500l2 2.500 2-2.500z" fill="#222"/><use href="#fopen" x="437" y="149.500" width="8" height="8"/><text x="452.500" y="155.500">控制面板</text>
<path d="M443 172.500l2 2.500 2-2.500z" fill="#222"/><use href="#fopen" x="447.500" y="169.500" width="8" height="8"/><text x="463" y="175.500">个人中心</text>
<use href="#file" x="464" y="188.500" width="9" height="9" color="#555"/><text x="476.600" y="195.500">我的桌面</text>
<use href="#file" x="464" y="208" width="9" height="9" color="#555"/><text x="476.600" y="215.500">我的资料</text>
<use href="#file" x="464" y="228" width="9" height="9" color="#555"/><text x="476.600" y="235">我的操作记录</text>
<path d="M432.500 249l2.500 2-2.500 2z" fill="#222"/><use href="#fold" x="440" y="248.500" width="8" height="8"/><text x="452.500" y="254.500">信息系统</text>
<path d="M432.500 269l2.500 2-2.500 2z" fill="#222"/><use href="#fold" x="440" y="268" width="8" height="8"/><text x="452.500" y="274.500">工作流程</text>
<path d="M432.500 288.500l2.500 2-2.500 2z" fill="#222"/><use href="#fold" x="440" y="288" width="8" height="8"/><text x="452.500" y="294">微信系统</text>
<path d="M432.500 308l2.500 2-2.500 2z" fill="#222"/><use href="#fold" x="440" y="307.500" width="8" height="8"/><text x="452.500" y="314">系统管理</text>
<path d="M432.500 328l2.500 2-2.500 2z" fill="#222"/><use href="#fold" x="440" y="327.500" width="8" height="8"/><text x="452.500" y="333.500">权限系统</text>
<path d="M432.500 348l2.500 2-2.500 2z" fill="#222"/><use href="#fold" x="440" y="347.500" width="8" height="8"/><text x="452.500" y="353.500">缺陷系统</text>
</g>
</g>

<!-- PANEL 4 -->
<g transform="translate(-.5,1516)">
<rect width="900" height="33" fill="#3c8dbc"/><rect width="143" height="33" fill="#367fa9"/><rect x="439" width="49" height="33" fill="#4a9f48"/><use href="#hi" style="stroke:none;fill:none"/>
<text class="logo" x="71" y="23">Ymnets-Admin</text>
<text class="nav" x="167" y="26">开发指南</text><text class="nav" x="216.500" y="26">信息系统</text><text class="nav" x="266" y="26">工作流程</text><text class="nav" x="315.500" y="26">微信系统</text><text class="nav" x="365" y="26">系统管理</text><text class="nav" x="414.500" y="26">权限系统</text><text class="nav" x="463.500" y="26">缺陷系统</text><text class="w" x="814" y="19.500">作者</text>
<use href="#side" style="stroke:none;fill:none"/>
<text class="mn" x="13" y="47.500">MAIN NAVIGATION</text>
<use href="#bug" x="10.500" y="68" width="9" height="9" color="#333"/><text class="k" x="28.500" y="76" style="font-size:8.500px">缺陷管理与测试</text>
<rect y="132" width="143" height="23" fill="#e9ecef"/>
<use href="#tlist" x="22" y="92.500" width="9" height="9" color="#222"/><text x="38.400" y="100">用例定义</text>
<use href="#tlist" x="22" y="115.500" width="9" height="9" color="#222"/><text x="38.400" y="123">用例步骤</text>
<use href="#tlist" x="22" y="138.500" width="9" height="9" color="#222"/><text x="38.400" y="146">测试任务</text>
<use href="#clock" x="22" y="161.500" width="9" height="9" color="#333"/><text x="38.400" y="169">任务明细</text>
<use href="#tag" x="22" y="184.500" width="9" height="9" color="#222"/><text x="38.400" y="192">测试项目</text>
<use href="#hour" x="22" y="207.500" width="9" height="9" color="#222"/><text x="38.400" y="215">运行测试</text>
<use href="#cross" x="22" y="230.500" width="9" height="9" color="#333"/><text x="38.400" y="238">缺陷报告</text>
<use href="#tree" x="22" y="253.500" width="9" height="9" color="#222"/><text x="38.400" y="261">用例分类</text>
<use href="#ff" x="22" y="277" width="9" height="9" color="#222"/><text x="38.400" y="285">开发跟踪</text>
<rect x="145" y="34.500" width="63.500" height="22" rx="2" fill="#f5f5f5" stroke="#ddd" stroke-width=".7"/><use href="#home" x="155.500" y="42" width="7" height="7" color="#444"/><text x="167" y="48.500">我的桌面</text>
<rect x="211" y="34.500" width="86" height="22" rx="2" fill="#f5f5f5" stroke="#ddd" stroke-width=".7"/><use href="#key" x="221.500" y="42" width="7" height="7" color="#666"/><text x="234" y="48.500">角色权限设置</text><text x="288" y="48.500" class="d" style="font-weight:bold;font-size:7px">×</text>
<path d="M301 57V35q0-1.500 2-1.500h64q2 0 2 1.500V57z" fill="#fff"/><path d="M301 35q0-1.500 2-1.500h64q2 0 2 1.500" fill="none" stroke="#3c8dbc" stroke-width="1.300"/><use href="#tlist" x="310" y="44" width="8" height="8" color="#444"/><text class="d" x="322" y="50.500">测试任务</text><text class="d" x="360" y="49.500" style="font-weight:bold;font-size:7px">×</text>
<rect x="148" y="62" width="56" height="20" rx="2" fill="#fff" stroke="#ccc" stroke-width=".8"/><text x="153" y="76" style="font-size:9px">显示全部</text><path d="M196 71h4l-2 3z" fill="#444"/>
<rect x="208" y="60.700" width="190" height="19.300" rx="2" class="box"/>
<g color="#333"><use href="#search" x="409.500" y="66" width="8" height="8"/><text x="421" y="74">查询</text><use href="#plus" x="452.500" y="65.500" width="8" height="8"/><text x="462" y="74">创建</text><use href="#trash" x="496" y="66" width="8" height="8"/><text x="506" y="74">删除</text><use href="#copy" x="539" y="66" width="8" height="8"/><text x="551" y="74">复制</text><use href="#lock" x="583" y="66" width="8" height="8"/><text x="593" y="74">锁定</text><use href="#unlock" x="625" y="66" width="8" height="8"/><text x="637" y="74">解锁</text><use href="#pow" x="670" y="66" width="8" height="8"/><text x="683" y="74">设为关闭</text><use href="#half" x="732" y="66" width="8" height="8"/><text x="745" y="74">设为开启</text><use href="#flag" x="794" y="66" width="8" height="8"/><text x="805.600" y="74">设为默认</text></g>
<path class="sep" d="M444 65V79M485.600 65V79M530 65V79M574 65V79M615 65V79M660 65V79M722 65V79M784 65V79"/>
<use href="#tri" x="865" y="57" style="stroke:none;fill:none"/>
<rect x="149" y="83" width="516" height="25" fill="#f5f5f5"/><rect x="149" y="108" width="503" height="72" fill="#e3e6e9"/>
<path class="ln" d="M149 83.500H665M149 83V503M665 83V503M149 482H665M149 503H665"/>
<path class="da" d="M238 83V180M327 83V180M370 83V180M424 83V180M476.500 83V180M518 83V180M541 83V180M597 83V180M652 83V180M149 144H652M149 180H652"/>
<text class="td" x="153" y="99">版本号</text><text class="td" x="243" y="99">名称</text><text class="td m" x="348" y="93">测试结</text><text class="td m" x="345" y="105">果</text><text class="td" x="374" y="99">创建人</text><text class="td" x="429.400" y="99">创建时间 ▾</text><text class="td m" x="497" y="93">锁定状</text><text class="td m" x="493" y="105">态</text><text class="td m" x="530" y="93">启</text><text class="td m" x="530" y="105">用</text><text class="td" x="546.500" y="99">关闭人</text><text class="td" x="601.600" y="99">关闭时间</text>
<g><text class="td" x="153" y="129.500" style="fill:#2a3fb0">DEF_V1</text><text class="td" x="243" y="129.500" style="fill:#2a3fb0">缺陷管理系统自测</text><text class="m" x="348.500" y="129.500" style="fill:#d22">×</text><text class="td" x="374" y="129.500" style="fill:#2a3fb0">作者</text><text class="td" x="429.400" y="118" style="fill:#2a3fb0">2014-04-</text><text class="td" x="429.400" y="129.500" style="fill:#2a3fb0">15</text><text class="td" x="429.400" y="141" style="fill:#2a3fb0">15:41:25</text><text class="m" x="497" y="130" style="fill:#2bb24c;font-size:10px">√</text><rect x="523" y="116" width="15" height="20" rx="2" fill="#c0302c"/><text class="w m" x="530.500" y="124.500">禁</text><text class="w m" x="530.500" y="133">用</text></g>
<g><text class="td" x="153" y="166">DEF_V2</text><text class="td" x="243" y="166">缺陷管理系统自测</text><text class="m" x="348.500" y="166" style="fill:#4a8fd0;font-size:7px">○</text><text class="td" x="374" y="166">作者</text><text class="td" x="429.400" y="154">2014-04-</text><text class="td" x="429.400" y="166">16</text><text class="td" x="429.400" y="178">11:18:16</text><text class="m" x="497" y="166.500" style="fill:#2bb24c;font-size:10px">√</text><rect x="523" y="152" width="15" height="20" rx="2" fill="#c0302c"/><text class="w m" x="530.500" y="160.500">禁</text><text class="w m" x="530.500" y="169">用</text></g>
<rect x="153" y="485" width="28.500" height="15" rx="2" class="box"/><text class="td" x="158.500" y="496">15</text><path d="M174.500 491.500h4l-2 3z" fill="#444"/><path class="sep" d="M187.500 485V500M229 485V500M293.500 485V500M335 485V500"/>
<use href="#first" x="194" y="488.500" width="8" height="8" color="#777"/><use href="#prev" x="214" y="488.500" width="8" height="8" color="#777"/><text class="d" x="233.500" y="496">第</text><rect x="244.500" y="485" width="21" height="15" rx="2" class="box"/><text class="td" x="248.500" y="496">1</text><text class="d" x="267" y="496">共1页</text><use href="#next" x="301" y="488.500" width="8" height="8" color="#777"/><use href="#last" x="320" y="488.500" width="8" height="8" color="#777"/><use href="#ref" x="342" y="488.500" width="8" height="8" color="#555"/><text class="r" x="660" y="496">显示1到2,共2记录</text>
<g class="dt"><text class="r" x="710" y="95">版本号：</text><text x="715" y="95">DEF_V1</text><text class="r" x="710" y="111.500">名称：</text><text x="715" y="111.500">缺陷管理系统自测（默认）</text><text class="r" x="710" y="127">创建人：</text><text x="715" y="127">作者</text><text class="r" x="710" y="143">创建日期：</text><text x="715" y="143">2014-04-15 15:41:25</text><text class="r" x="710" y="159">测试通过：</text><text x="716" y="159" style="fill:#d22">×</text><text class="r" x="710" y="175">关闭状态：</text><text x="716" y="175" style="fill:#d22">×</text><text class="r" x="710" y="191">关闭人：</text><text class="r" x="710" y="208">关闭日期：</text><text class="r" x="710" y="224">说明：</text></g>
<rect x="667" y="229" width="217" height="290" fill="#fff" stroke="#ddd" stroke-width=".8"/><text x="668.500" y="240">缺陷管理系统自测</text>
<rect x="888.500" y="57" width="12" height="448" fill="#f1f1f1"/><rect x="890" y="69" width="9" height="436" fill="#c1c1c1"/><path d="M894.500 61l2 3h-4z" fill="#666"/>
</g>

<!-- PANEL 5 -->
<g transform="translate(1.500,2020)">
<rect x="-2" width="902" height="33" fill="#3c8dbc"/><rect x="-2" width="145" height="33" fill="#367fa9"/><rect x="143" width="49" height="33" fill="#4a9f48"/><use href="#hi" style="stroke:none;fill:none"/>
<text class="logo" x="71" y="23">Ymnets-Admin</text>
<text class="nav" x="167" y="26">开发指南</text><text class="nav" x="216.500" y="26">信息系统</text><text class="nav" x="266" y="26">工作流程</text><text class="nav" x="315.500" y="26">微信系统</text><text class="nav" x="365" y="26">系统管理</text><text class="nav" x="414.500" y="26">权限系统</text><text class="nav" x="463.500" y="26">缺陷系统</text><text class="w" x="814" y="19.500">作者</text>
<use href="#side" style="stroke:none;fill:none"/>
<text class="mn" x="13" y="47.500">MAIN NAVIGATION</text>
<use href="#puzzle" x="10" y="68" width="9" height="9" color="#333"/><text class="k" x="28.500" y="76" style="font-size:8.500px">简单样例</text>
<rect y="85.500" width="143" height="23" fill="#e9ecef"/>
<use href="#horn" x="22.500" y="93" width="9" height="9" color="#444"/><text x="39" y="100">模板样例</text>
<use href="#upl" x="23" y="115.500" width="9" height="9" color="#222"/><text x="39" y="123">上传文件例子</text>
<use href="#puzzle" x="23" y="138.500" width="9" height="9" color="#333"/><text x="39" y="146">产品类别</text>
<use href="#copy" x="10" y="489" width="9" height="9" color="#333"/><text x="28.700" y="497">复杂样例</text><use href="#chev" x="129" y="490.500" width="8" height="8" color="#999"/>
<rect x="145" y="34.500" width="63.500" height="22" rx="2" fill="#f5f5f5" stroke="#ddd" stroke-width=".7"/><use href="#home" x="155.500" y="42" width="7" height="7" color="#444"/><text x="167" y="48.500">我的桌面</text>
<path d="M212.600 57V35q0-1.500 2-1.500h65q2 0 2 1.500V57z" fill="#fff"/><path d="M212.600 35q0-1.500 2-1.500h65q2 0 2 1.500" fill="none" stroke="#3c8dbc" stroke-width="1.300"/><use href="#horn" x="222" y="43" width="8" height="8" color="#444"/><text class="d" x="234" y="50.500">模板样例</text><text class="d" x="272.500" y="49.500" style="font-weight:bold;font-size:7px">×</text>
<rect x="149" y="61" width="189" height="19" rx="2" class="box"/>
<g color="#333"><use href="#search" x="350" y="66" width="8" height="8"/><text x="361" y="74">查询</text><use href="#plus" x="393.500" y="65.500" width="8" height="8"/><text x="404.400" y="74">创建</text><use href="#pen" x="436.500" y="66" width="8" height="8"/><text x="447.400" y="74">修改</text><use href="#tlist" x="480.500" y="65.500" width="9" height="8"/><text x="493" y="74">详细</text><use href="#trash" x="524.500" y="65.500" width="8" height="8"/><text x="536" y="74">删除</text></g>
<path class="sep" d="M384 65V79M427 65V79M470.400 65V79M515 65V79M558 65V79"/>
<use href="#tri" x="877" y="57" style="stroke:none;fill:none"/>
<rect x="149" y="84" width="745" height="20.700" fill="#f6f6f6"/><rect x="149" y="146.700" width="733.600" height="42.600" fill="#fafafa"/><rect x="149" y="232" width="733.600" height="43.300" fill="#e3e6e9"/><rect x="149" y="318" width="733.600" height="42.700" fill="#fafafa"/><rect x="149" y="403.300" width="733.600" height="43" fill="#fafafa"/>
<path class="ln" d="M149 84H894V502H149ZM149 104.700H894"/>
<path class="da" d="M223 84V482M278 84V482M324 84V482M397.500 84V482M490.500 84V482M731.600 84V482M882.600 84V482M149 146.700H882.600M149 189.300H882.600M149 232H882.600M149 275.300H882.600M149 318H882.600M149 360.700H882.600M149 403.300H882.600M149 446.300H882.600"/>
<text class="td" x="154" y="97.500">ID ▾</text><text class="td" x="228" y="97.500">名称</text><text class="td r" x="312" y="97.500">年龄</text><text class="td r" x="385" y="97.500">生日</text><text class="td m" x="444.500" y="97.500">照片</text><text class="td" x="496" y="97.500">说明</text><text class="td m" x="807" y="97.500">创建时间</text>
<!-- faces -->
<g>
<path d="M432 122q-4-8 2-10 5 0 4 7-1 5-6 3zM448 122q4-8-2-10-5 0-4 7 1 5 6 3z" fill="#111"/><path d="M428 130q16 13 32 0" fill="none" stroke="#555" stroke-width=".6"/>
<rect x="418" y="147" width="53" height="40" fill="#9b0a1f"/><path d="M434 167q14 8 20-6-8 6-20 3q-2 4 0 3z" fill="#f6e8dc"/><path d="M436 162l8-5-2 5z" fill="#e8b030"/>
<rect x="418" y="189" width="53" height="41" fill="#efe6c8"/><path d="M431 207l12 7M458 207l-12 7" stroke="#222" stroke-width="2.500"/><path d="M438 220q6 4 12 0" fill="none" stroke="#777" stroke-width=".7"/>
<rect x="418" y="232.700" width="53" height="40" fill="#f1a3b0"/><path d="M434 252h7M448 252h7M441 258q3 2 6 0" stroke="#c8707f" stroke-width=".8" fill="none"/>
<rect x="418" y="276" width="53" height="39.300" fill="#7f4a14"/><ellipse cx="444" cy="299" rx="7" ry="8" fill="#fff"/><circle cx="438" cy="289" r="2.500" fill="#fff"/><circle cx="450" cy="289" r="2.500" fill="#fff"/><circle cx="444" cy="293" r="2" fill="#222"/>
<rect x="418" y="318" width="53" height="40" fill="#7cbf3f"/><path d="M436 331q8-4 16 0v3h-16z" fill="#222"/><circle cx="441" cy="337" r="3" fill="#e6f3d0"/><circle cx="449" cy="337" r="3" fill="#e6f3d0"/><path d="M434 344q10 8 20 0-10 3-20 0z" fill="#a52a1c" stroke="#a52a1c" stroke-width="3"/>
<rect x="418" y="361" width="53" height="40" fill="#a3d72f"/><circle cx="445" cy="378" r="5" fill="#e8f5c8"/><circle cx="445" cy="378" r="2.500" fill="#247a4a"/><path d="M436 387q10 4 18-3" fill="none" stroke="#e8f5c8" stroke-width="1.500"/>
<rect x="418" y="404" width="53" height="40" fill="#b26a1c"/><ellipse cx="444" cy="430" rx="11" ry="11" fill="#4a2418"/><circle cx="438" cy="433" r="2" fill="#e8d8c8"/><circle cx="450" cy="433" r="2" fill="#e8d8c8"/>
<rect x="418" y="446.700" width="53" height="35" fill="#5f7f64"/><ellipse cx="445" cy="463" rx="9" ry="4" fill="#e8ece2"/><path d="M431 462h6M453 462h6M433 466h5M452 466h5" stroke="#333" stroke-width=".5"/><circle cx="441" cy="459" r="1.500" fill="#fff"/><circle cx="449" cy="459" r="1.500" fill="#fff"/>
</g>
<g clip-path="url(#cid)"><text class="td" x="154" y="128.700">201602171809549</text><text class="td" x="154" y="171.300">201602171809085</text><text class="td" x="154" y="214.300">201602171808155</text><text class="td" x="154" y="257">201602171807278</text><text class="td" x="154" y="299.700">201602171724514</text><text class="td" x="154" y="342.700">201602171722344</text><text class="td" x="154" y="385.700">201602171721306</text><text class="td" x="154" y="428.300">201602171720411</text><text class="td" x="154" y="471.300">201602171719370</text></g>
<text class="td" x="228" y="128.700">杨伟</text><text class="td r" x="319.400" y="128.700">36</text><text class="td r" x="393.500" y="128.700">1991-08-07</text><text class="td" x="496" y="128.700">鸡蛋，从外打破是食物，从内打破是生命。</text><text class="td m" x="807" y="128.700">2016-02-17 18:09:54</text>
<text class="td" x="228" y="171.300">韦学凯</text><text class="td r" x="319.400" y="171.300">5</text><text class="td r" x="393.500" y="171.300">2011-11-17</text><text class="td" x="496" y="171.300">这世界上除了你自己，没有谁可以真正帮到你。</text><text class="td m" x="807" y="171.300">2016-02-17 18:09:08</text>
<text class="td" x="228" y="214.300">罗体仁</text><text class="td r" x="319.400" y="214.300">2</text><text class="td r" x="393.500" y="214.300">2014-02-05</text><text class="td" x="496" y="214.300">练就一颗忍耐、豁达、睿智的心，幸福才会来。</text><text class="td m" x="807" y="214.300">2016-02-17 18:08:15</text>
<text class="td" x="228" y="257">黄叔兰</text><text class="td r" x="319.400" y="257">56</text><text class="td r" x="393.500" y="257">1973-03-06</text><text class="td" x="496" y="251">习惯看彼此的谎言，重复万遍也不觉厌倦;等待看彼此的眼安，只因</text><text class="td" x="496" y="263">为心里那份惦念</text><text class="td m" x="807" y="257">2016-02-17 18:07:27</text>
<text class="td" x="228" y="299.700">史定</text><text class="td r" x="319.400" y="299.700">45</text><text class="td r" x="393.500" y="299.700">1974-02-17</text><text class="td" x="496" y="299.700">趁着年轻，大胆地走出去，去迎接风霜雨雪的洗礼。</text><text class="td m" x="807" y="299.700">2016-02-17 17:24:51</text>
<text class="td" x="228" y="342.700">蒋欣志</text><text class="td r" x="319.400" y="342.700">1</text><text class="td r" x="393.500" y="342.700">2016-02-17</text><text class="td" x="496" y="342.700">若有若无的联系，是一份随意;或深或浅的交集，是一份默契。</text><text class="td m" x="807" y="342.700">2016-02-17 17:22:34</text>
<text class="td" x="228" y="385.700">尤多吨</text><text class="td r" x="319.400" y="385.700">55</text><text class="td r" x="393.500" y="385.700">1977-02-17</text><text class="td" x="496" y="385.700">走千条路，只一条适合;遇万般人，得一人足够。</text><text class="td m" x="807" y="385.700">2016-02-17 17:21:30</text>
<text class="td" x="228" y="428.300">电周沧</text><text class="td r" x="319.400" y="428.300">4</text><text class="td r" x="393.500" y="428.300">2012-10-11</text><text class="td" x="496" y="428.300">可望曾畅谈，也可默然相对;可紧密相依，也可忘于不见。</text><text class="td m" x="807" y="428.300">2016-02-17 17:20:41</text>
<text class="td" x="228" y="471.300">范建</text><text class="td r" x="319.400" y="471.300">16</text><text class="td r" x="393.500" y="471.300">2000-02-17</text><text class="td" x="496" y="471.300">人生是很苦的，你现在不苦，以后就会更苦。</text><text class="td m" x="807" y="471.300">2016-02-17 17:19:37</text>
<rect x="882.800" y="105" width="11" height="377" fill="#f3f3f3"/><rect x="886" y="115" width="8" height="313" fill="#c1c1c1"/><path d="M889.500 108l2 3h-4zM889.500 478l2-3h-4z" fill="#666"/>
<rect x="149.400" y="482" width="744.200" height="20" fill="#fafafa"/><path class="ln" d="M149 482H894"/>
<rect x="154" y="485" width="28" height="15" rx="2" class="box"/><text class="td" x="159" y="496">10</text><path d="M175 491.500h4l-2 3z" fill="#444"/><path class="sep" d="M188 485V500M229 485V500M294 485V500M336 485V500"/>
<use href="#first" x="195" y="488.500" width="8" height="8" color="#777"/><use href="#prev" x="215" y="488.500" width="8" height="8" color="#777"/><text class="d" x="234" y="496">第</text><rect x="245" y="485" width="21" height="15" rx="2" class="box"/><text class="td" x="249" y="496">1</text><text class="d" x="267.500" y="496">共2页</text><use href="#next" x="302" y="488.500" width="8" height="8" color="#111"/><use href="#last" x="321" y="488.500" width="8" height="8" color="#111"/><use href="#ref" x="343" y="488.500" width="8" height="8" color="#555"/><text class="r" x="892" y="496">显示1到10,共13记录</text>
</g>
<text x="218" y="2463" textLength="465" lengthAdjust="spacingAndGlyphs" style="font-family:'Liberation Serif',serif;font-size:27px;fill:#fff;fill-opacity:.75;stroke:#999;stroke-width:.6">https://www.huzhan.com/1shop12174</text>
</svg>
</body></html>
